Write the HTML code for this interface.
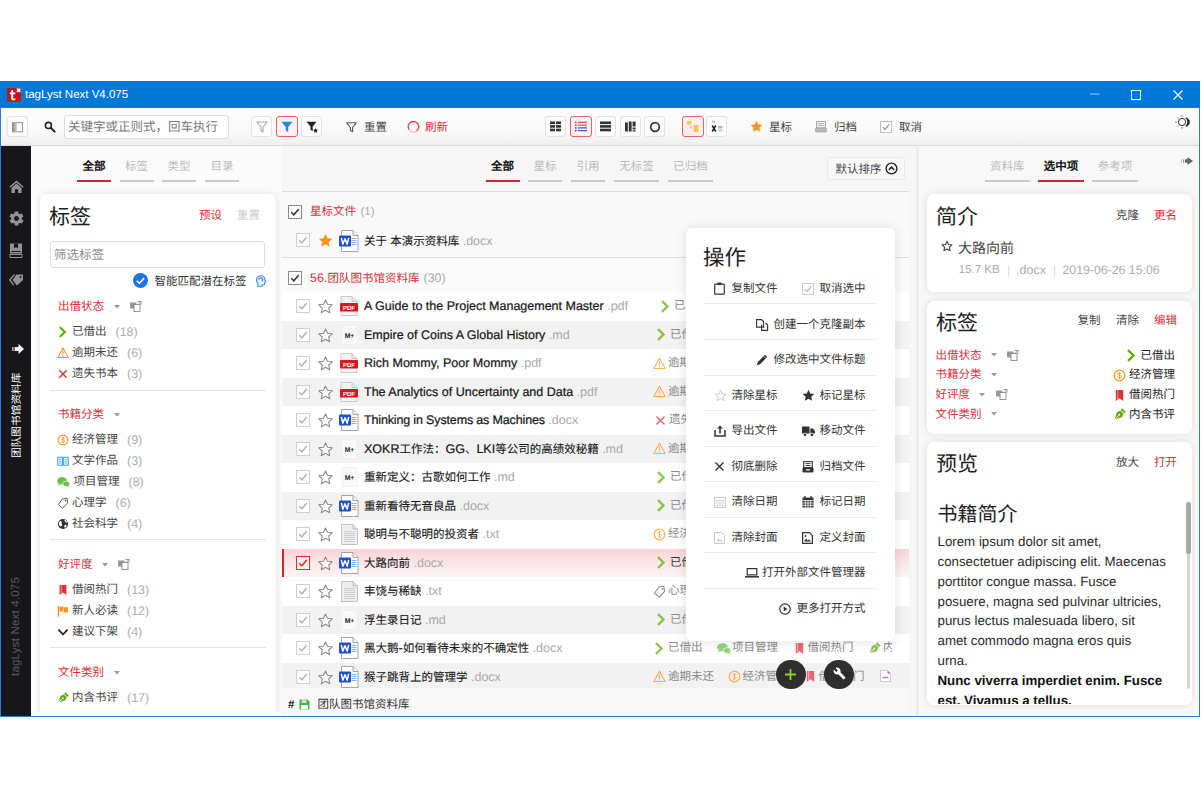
<!DOCTYPE html>
<html lang="zh-CN">
<head>
<meta charset="utf-8">
<title>tagLyst Next V4.075</title>
<style>
*{box-sizing:border-box;margin:0;padding:0}
html,body{width:1202px;height:794px;overflow:hidden;background:#fff}
body{position:relative;font-family:"Liberation Sans",sans-serif;font-size:12px;color:#333;text-rendering:geometricPrecision}
.a{position:absolute;white-space:nowrap}
.t{position:absolute;white-space:nowrap;overflow:visible;height:17px;line-height:17px;font-size:11.5px}
svg{position:absolute;overflow:visible}
.red{color:#d6303a}
.g9{color:#999}
.ga{color:#aaa}
/* window */
#win{left:0;top:81px;width:1200px;height:636px;background:#f6f6f6;border:1px solid #2f7bd6;border-top:0;overflow:hidden}
#title{left:0;top:81px;width:1200px;height:27px;background:#0078d7}
#tool{left:1px;top:108px;width:1198px;height:38px;background:linear-gradient(#fdfdfd 0,#f8f8f8 70%,#eeeeee 100%);border-bottom:1px solid #dcdcdc}
#side{left:1px;top:146px;width:30px;height:570px;background:#17161b}
#lp{left:31px;top:146px;width:251px;height:570px;background:#fbfbfb}
#mp{left:282px;top:146px;width:627px;height:570px;background:#f6f6f6}
#split{left:909px;top:146px;width:11px;height:570px;background:#f6f6f6;border-right:4.5px solid #ececec}
#rp{left:919px;top:146px;width:280px;height:570px;background:#f8f8f8}
.card{position:absolute;background:#fff;border-radius:7px;box-shadow:0 0 7px 1px rgba(0,0,0,.085)}
.tb{position:absolute;top:116px;width:21px;height:21px;border:1px solid #e3e3e3;border-radius:3px;background:#fcfcfc}
.tb.on{border-color:#e4646b;background:#fdf3f3}
.tab{position:absolute;top:159px;height:16px;line-height:16px;font-size:11.5px;color:#bbb;text-align:center;white-space:nowrap;overflow:hidden}
.tab.on{color:#111;font-weight:bold}
.ul{position:absolute;top:180px;height:2px;background:#c9c9c9}
.ul.on{background:#d6222c}
.h{position:absolute;white-space:nowrap;overflow:hidden;font-size:21px;height:28px;line-height:28px;color:#1d1d1d}
.hr{position:absolute;height:1px;background:#e6e6e6}
.fn{-webkit-text-stroke:.1px #161616;position:absolute;left:364px;height:18px;line-height:18px;font-size:11.5px;color:#161616;white-space:nowrap;overflow:hidden;width:285px}
.fn .l{font-size:12.5px;-webkit-text-stroke:.22px #161616}
.fn .ext{font-size:12.5px;color:#a8a8a8;-webkit-text-stroke:0}
i{display:inline-block;width:1em;text-align:center;font-style:normal}
</style>
</head>
<body>
<div class="a" id="win"></div>
<div class="a" id="title"></div>
<div class="a" id="tool"></div>
<div class="a" id="side"></div>
<div class="a" id="lp"></div>
<div class="a" id="mp"></div>
<div class="a" id="split"></div>
<div class="a" id="rp"></div>

<!-- TITLEBAR -->
<svg style="left:7px;top:88px" width="14" height="14" viewBox="0 0 14 14"><rect width="14" height="14" rx="1" fill="#c3161c"/><path d="M9.2 0.6h4.2v4.2l-1.5-1.4-1.2 1.2-1.3-1.3 1.2-1.2z" fill="#fff"/><path d="M4.2 2.2h2v2.3h2.1v1.7H6.2v3.2c0 .9.4 1.2 1 1.2.4 0 .8-.1 1.1-.3v1.6c-.5.3-1.1.4-1.8.4-1.500 0-2.300-.8-2.300-2.600V6.2H2.900V4.500h1.300z" fill="#fff"/></svg>
<div class="t" style="left:25px;top:87px;color:#fff;font-size:11.500px;width:110px" id="ttl">tagLyst Next V4.075</div>
<svg style="left:1090px;top:93px" width="10" height="2"><rect width="9.500" height="1" y="0.500" fill="#9cc8ee"/></svg>
<svg style="left:1131px;top:90px" width="10" height="10"><rect x="0.500" y="0.500" width="9" height="9" fill="none" stroke="#fff" stroke-width="1"/></svg>
<svg style="left:1173px;top:90px" width="10" height="10"><path d="M0.500 0.500l9 9M9.500 0.500l-9 9" stroke="#fff" stroke-width="1.100" fill="none"/></svg>
<!-- TOOLBAR -->
<div class="tb" style="left:7px;width:21px"></div>
<svg style="left:12px;top:121.500px" width="11" height="10.500" viewBox="0 0 12 11"><defs><linearGradient id="gsb" x1="0" x2="1"><stop offset="0" stop-color="#8a8a8a"/><stop offset="1" stop-color="#d8d8d8"/></linearGradient></defs><rect x="0.500" y="0.500" width="11" height="10" fill="#fff" stroke="#8a8a8a"/><rect x="1" y="1" width="4.500" height="9" fill="url(#gsb)"/></svg>
<svg style="left:44px;top:121px" width="12" height="12" viewBox="0 0 13 13"><circle cx="4.800" cy="4.800" r="3.300" fill="none" stroke="#222" stroke-width="1.700"/><path d="M7.300 7.300l4.200 4.200" stroke="#222" stroke-width="2.200" stroke-linecap="round"/></svg>
<div class="a" style="left:64px;top:115px;width:165px;height:24px;border:1px solid #dedede;border-radius:3px;background:#fff"></div>
<div class="t" style="left:68px;top:118px;width:158px;height:18px;line-height:18px;font-size:12.500px;color:#777"><i>关</i><i>键</i><i>字</i><i>或</i><i>正</i><i>则</i><i>式</i><i>，</i><i>回</i><i>车</i><i>执</i><i>行</i></div>
<div class="tb" style="left:251px"></div>
<svg style="left:256px;top:121px" width="12" height="12" viewBox="0 0 12 12"><path d="M1 1h10L7 6v5L5 9.500V6z" fill="none" stroke="#aaa" stroke-width="1.100" stroke-linejoin="round"/></svg>
<div class="tb on" style="left:276px;width:22px"></div>
<svg style="left:281px;top:121px" width="12" height="12" viewBox="0 0 12 12"><path d="M0.500 0.800h11L7.200 6v5.200L4.800 9.600V6z" fill="#1e88e5"/></svg>
<div class="tb" style="left:301px"></div>
<svg style="left:306px;top:121px" width="12" height="12" viewBox="0 0 12 12"><path d="M0.500 0.800h10L6.700 5.500v4.700L4.500 8.800V5.500z" fill="#222"/><path d="M9.500 7l.8 1.600 1.700.2-1.200 1.200.3 1.700-1.600-.8-1.500.8.300-1.700-1.300-1.200 1.800-.2z" fill="#222"/></svg>
<svg style="left:346px;top:122px" width="11" height="11" viewBox="0 0 11 11"><path d="M0.800 0.800h9.400L6.600 5.500v4.300L4.400 8.600V5.500z" fill="none" stroke="#555" stroke-width="1.100" stroke-linejoin="round"/></svg>
<div class="t" style="left:364px;top:120px;width:26px;color:#444"><i>重</i><i>置</i></div>
<svg style="left:407px;top:120px" width="13" height="13" viewBox="0 0 13 13"><path d="M2.100 9.800A5.300 5.300 0 1 1 9.400 11.200" fill="none" stroke="#e0444c" stroke-width="1.300"/><path d="M2.100 9.800A5.300 5.300 0 0 0 9.400 11.200" fill="none" stroke="#f3b9bc" stroke-width="1.300"/></svg>
<div class="t red" style="left:425px;top:120px;width:26px"><i>刷</i><i>新</i></div>

<div class="tb" style="left:545px"></div>
<svg style="left:550px;top:121px" width="11" height="11" viewBox="0 0 11 11"><g fill="#333"><rect x="0" y="0.500" width="5" height="2.600"/><rect x="6" y="0.500" width="5" height="2.600"/><rect x="0" y="4.100" width="5" height="2.600"/><rect x="6" y="4.100" width="5" height="2.600"/><rect x="0" y="7.700" width="5" height="2.600"/><rect x="6" y="7.700" width="5" height="2.600"/></g></svg>
<div class="tb on" style="left:570px;width:22px"></div>
<svg style="left:575px;top:121px" width="12" height="11" viewBox="0 0 12 11"><g fill="#e0444c"><rect x="0" y="0.500" width="1.600" height="1.600"/><rect x="3" y="0.700" width="9" height="1.200"/><rect x="0" y="3.300" width="1.600" height="1.600"/><rect x="3" y="3.500" width="9" height="1.200"/></g><g fill="#3f51b5"><rect x="0" y="6.100" width="1.600" height="1.600"/><rect x="3" y="6.300" width="9" height="1.200"/><rect x="0" y="8.900" width="1.600" height="1.600"/><rect x="3" y="9.100" width="9" height="1.200"/></g></svg>
<div class="tb" style="left:595px"></div>
<svg style="left:600px;top:121px" width="11" height="11" viewBox="0 0 11 11"><g fill="#333"><rect x="0" y="0.500" width="11" height="2.600"/><rect x="0" y="4.100" width="11" height="2.600"/><rect x="0" y="7.700" width="11" height="2.600"/></g></svg>
<div class="tb" style="left:620px"></div>
<svg style="left:625px;top:121px" width="11" height="11" viewBox="0 0 11 11"><g fill="#333"><rect x="0" y="1.500" width="2.800" height="9"/><rect x="3.800" y="0.500" width="2.800" height="10"/><rect x="7.600" y="0.500" width="3" height="5"/><rect x="7.600" y="6.500" width="3" height="2"/><rect x="7.600" y="9.300" width="3" height="1.200"/></g></svg>
<div class="tb" style="left:644px"></div>
<svg style="left:649px;top:121px" width="12" height="12" viewBox="0 0 12 12"><circle cx="6" cy="6" r="4.300" fill="none" stroke="#333" stroke-width="1.700"/></svg>
<div class="tb on" style="left:682px;width:22px;background:#fdeeee"></div>
<svg style="left:686px;top:120px" width="14" height="13" viewBox="0 0 14 13"><path d="M1 1h4.500v3.500H1z" fill="#f3c948"/><path d="M7.500 5h5v3l-1 .8 1 .7v2.500h-5z" fill="#f3c948"/><circle cx="5" cy="7.500" r="1" fill="#bbb"/><path d="M5 5.500v4" stroke="#ccc" stroke-width=".6"/></svg>
<div class="tb" style="left:706px"></div>
<svg style="left:710px;top:120px" width="14" height="13" viewBox="0 0 14 13"><rect x="2" y="0.500" width="3" height="2.500" fill="#ccc"/><path d="M2.200 5.500l3.600 6M5.800 5.500l-3.600 6" stroke="#222" stroke-width="1.500"/><rect x="8" y="6" width="4.500" height="2.500" fill="#bbb"/><rect x="8" y="9.300" width="4.500" height="2.200" fill="#ccc"/></svg>
<svg style="left:750px;top:120px" width="13" height="13" viewBox="0 0 24 24"><path d="M12 1.500l3.200 7 7.600.800-5.700 5.100 1.600 7.500L12 18.100l-6.700 3.800 1.600-7.500L1.200 9.300l7.600-.8z" fill="#f7941d"/></svg>
<div class="t" style="left:769px;top:120px;width:26px;color:#444"><i>星</i><i>标</i></div>
<svg style="left:815px;top:121px" width="12" height="12" viewBox="0 0 12 12"><rect x="1.500" y="0.500" width="9" height="6.500" fill="#eee" stroke="#999" stroke-width=".8"/><path d="M3 2.500h6M3 4.500h6" stroke="#aaa" stroke-width=".8"/><rect x="0.500" y="7" width="11" height="4" rx=".8" fill="#bbb" stroke="#999" stroke-width=".6"/></svg>
<div class="t" style="left:834px;top:120px;width:26px;color:#444"><i>归</i><i>档</i></div>
<svg style="left:880px;top:121px" width="12" height="12" viewBox="0 0 12 12"><rect x="0.500" y="0.500" width="11" height="11" fill="#fff" stroke="#bbb"/><path d="M2.800 6.200l2.200 2.300 4.200-5" fill="none" stroke="#999" stroke-width="1.200"/></svg>
<div class="t" style="left:899px;top:120px;width:26px;color:#444"><i>取</i><i>消</i></div>
<svg style="left:1175px;top:115px" width="15" height="14" viewBox="0 0 15 14"><path d="M8 2.800a4.300 4.300 0 0 1 0 8.600a6 6 0 0 0 0-8.600z" fill="#222" transform="translate(2.500 0)"/><circle cx="7" cy="7" r="3.600" fill="#fff" stroke="#333" stroke-width="1"/><g stroke="#555" stroke-width=".9"><path d="M7 0.300v1.600M7 12.100v1.600M0.300 7h1.600M2.300 2.300l1.100 1.100M2.300 11.700l1.100-1.100M11.700 2.300l-1.100 1.100M11.700 11.700l-1.100-1.100"/></g></svg>
<svg width="0" height="0" style="left:-10px;top:-10px"><defs>
<g id="icp"><rect x="0" y="1.500" width="6.500" height="6" fill="#999"/><rect x="4" y="3.500" width="6" height="7" fill="#fff" stroke="#888" stroke-width=".9"/><path d="M7.500 0.500h3.500v3M11 0.500L8.500 3" fill="none" stroke="#888" stroke-width=".9"/></g>
<g id="i-gt"><path d="M3 1.200l5.500 5.300-5.500 5.300" fill="none" stroke="#60ad00" stroke-width="2.300"/></g>
<g id="i-warn"><path d="M6.500 1.200l5.700 10.300H0.800z" fill="none" stroke="#f7941d" stroke-width="1.100" stroke-linejoin="round"/><path d="M6.500 4.500v3.800M6.500 9.300v1.200" stroke="#f7941d" stroke-width="1.200"/></g>
<g id="i-x"><path d="M2.500 2.500l8 8M10.500 2.500l-8 8" stroke="#e0303a" stroke-width="1.600"/></g>
<g id="i-dollar"><circle cx="6.500" cy="6.500" r="5.300" fill="none" stroke="#f7941d" stroke-width="1.200"/><path d="M8.200 4.700c-.4-.6-1-.8-1.700-.8-.9 0-1.600.4-1.600 1.200 0 1.700 3.400.8 3.400 2.600 0 .8-.8 1.300-1.800 1.300-.8 0-1.500-.3-1.900-.9M6.500 3v7" fill="none" stroke="#f7941d" stroke-width=".9"/></g>
<g id="i-book"><path d="M0.800 2.500h5v8.500h-5zM7.200 2.500h5v8.500h-5z" fill="none" stroke="#3f9be8" stroke-width="1.100"/><path d="M2 4.800h2.600M2 6.800h2.600M2 8.800h2.600M8.400 4.800H11M8.400 6.800H11M8.400 8.800H11" stroke="#3f9be8" stroke-width=".9"/></g>
<g id="i-chat"><ellipse cx="5.500" cy="5.200" rx="5.300" ry="4" fill="#6cc04a"/><path d="M2 7.500L1.200 10.500l3.300-2z" fill="#6cc04a"/><ellipse cx="10" cy="8.500" rx="3.800" ry="2.900" fill="#6cc04a" stroke="#fff" stroke-width=".7"/><path d="M12 10.500l1.400 2-2.900-1z" fill="#6cc04a"/></g>
<g id="i-tag"><path d="M6.500 2h5v5l-6 5L1.200 7.500z" fill="none" stroke="#555" stroke-width="1" stroke-linejoin="round" transform="rotate(-8 6.500 6.500)"/><circle cx="9.300" cy="4" r=".9" fill="#555"/></g>
<g id="i-globe"><circle cx="6.500" cy="6.500" r="5.500" fill="#333"/><path d="M3 3.500c1.500-.5 2.500.5 2 1.800-.4 1 .8 1.400.6 2.600-.2 1-1.300 1.600-2.400.900C2 8 1.500 5 3 3.500zM8 2c1.500.2 2.800 1.500 3 3-.8.300-1.500-.2-2-1-.5-.7-1.300-1-1-2zM8.500 7.500c1-.3 2 .3 1.800 1.300-.2.900-1 1.800-2 1.800-.5-.9-.5-2.500.2-3.100z" fill="#fff"/></g>
<g id="i-bm"><path d="M2.800 1h7.400v11L6.500 9.300 2.800 12z" fill="#e0303a"/><path d="M4.200 1h1v9l-1 .8z" fill="#f19aa0"/></g>
<g id="i-flag"><path d="M1.500 1v11.500" stroke="#f7941d" stroke-width="1.400"/><path d="M2.800 1.500h4v1h5v5.500h-4.500v-1H2.800z" fill="#f7941d"/><path d="M6.800 2.500v4.500" stroke="#fff" stroke-width=".6"/></g>
<g id="i-down"><path d="M1.500 4l5 5 5-5" fill="none" stroke="#222" stroke-width="2"/></g>
<g id="i-pen"><g transform="rotate(45 6.500 6.500)"><path d="M6.500 13.200L3 6.800l1.200-3.800h4.600L10 6.800z" fill="#62ad12"/><rect x="4" y="0.200" width="5" height="2.100" fill="#62ad12"/><path d="M6.500 12.500V7.500" stroke="#fff" stroke-width=".8"/><circle cx="6.500" cy="6.800" r=".9" fill="#fff"/></g></g>
</defs></svg>
<!-- SIDEBAR -->
<svg style="left:8.500px;top:179.500px" width="15" height="13" viewBox="0 0 14 12"><path d="M7 0.300L0.300 6.200l.9 1L7 2.200l5.800 5 .9-1z" fill="#939393"/><path d="M2.300 7.300L7 3.300l4.700 4V12H8.500V8.500h-3V12H2.300z" fill="#939393"/></svg>
<svg style="left:7.500px;top:209.500px" width="17" height="17" viewBox="0 0 24 24"><path fill="#939393" d="M19.400 13c0-.3.100-.6.100-1s0-.7-.1-1l2.100-1.600c.2-.1.200-.4.100-.6l-2-3.500c-.1-.2-.4-.3-.6-.2l-2.500 1c-.5-.4-1.100-.7-1.700-1l-.4-2.600c0-.2-.2-.4-.5-.4h-4c-.2 0-.5.200-.5.400l-.4 2.600c-.6.200-1.100.6-1.700 1l-2.500-1c-.2-.1-.5 0-.6.200l-2 3.500c-.1.200-.1.500.100.600L4.600 11c0 .3-.1.600-.1 1s0 .7.100 1l-2.100 1.600c-.2.100-.2.400-.1.600l2 3.500c.1.200.4.300.6.200l2.500-1c.5.400 1.100.7 1.700 1l.4 2.600c0 .2.200.4.500.4h4c.2 0 .5-.2.500-.4l.4-2.600c.6-.2 1.100-.6 1.700-1l2.500 1c.2.100.5 0 .6-.2l2-3.500c.1-.2.100-.5-.1-.6zM12 15.500c-1.900 0-3.500-1.600-3.500-3.500s1.600-3.500 3.500-3.500 3.500 1.600 3.500 3.500-1.600 3.500-3.500 3.500z"/></svg>
<svg style="left:9px;top:243px" width="14" height="15" viewBox="0 0 14 15"><path d="M1 0.500h12v10H1z" fill="#939393"/><path d="M5 0.500h4v5l-2-1.400-2 1.400z" fill="#17161b"/><path d="M1 11.500h12v3H1z" fill="none" stroke="#939393" stroke-width="1"/><path d="M2.500 8.500h9" stroke="#17161b" stroke-width="1"/></svg>
<svg style="left:9px;top:274px" width="15" height="12" viewBox="0 0 15 12"><path d="M7.500 0.500h6.500v5.500L8 11.500 3.500 6z" fill="#939393"/><circle cx="11.500" cy="3" r="1" fill="#17161b"/><path d="M5.500 0.500L0.700 6l4 5" fill="none" stroke="#939393" stroke-width="1.300"/></svg>
<svg style="left:12px;top:344px" width="12" height="10" viewBox="0 0 12 10"><path d="M6.500 0l5.500 5-5.500 5V7H3V3h3.500z" fill="#fff"/><rect x="0" y="3" width="1" height="4" fill="#e88"/><rect x="1.500" y="3" width="1" height="4" fill="#ccd"/></svg>
<div class="a" style="left:11px;top:458px;width:88px;height:13px;line-height:13px;font-size:10.700px;color:#fff;transform-origin:0 0;transform:rotate(-90deg);overflow:hidden"><i>团</i><i>队</i><i>图</i><i>书</i><i>馆</i><i>资</i><i>料</i><i>库</i></div>
<div class="a" style="left:9px;top:676px;width:104px;height:14px;line-height:14px;font-size:11.500px;color:#5a5a5e;transform-origin:0 0;transform:rotate(-90deg);overflow:hidden;letter-spacing:.2px">tagLyst Next 4.075</div>
<!-- LEFTPANEL -->
<div class="tab on" style="left:77px;width:34px"><i>全</i><i>部</i></div><div class="ul on" style="left:77px;width:34px"></div>
<div class="tab" style="left:119.5px;width:34px"><i>标</i><i>签</i></div><div class="ul" style="left:119.5px;width:34px"></div>
<div class="tab" style="left:162px;width:34px"><i>类</i><i>型</i></div><div class="ul" style="left:162px;width:34px"></div>
<div class="tab" style="left:205px;width:34px"><i>目</i><i>录</i></div><div class="ul" style="left:205px;width:34px"></div>
<div class="card" style="left:40px;top:194px;width:235.500px;height:524px"></div>
<div class="h" style="left:49px;top:203.500px;width:60px"><i>标</i><i>签</i></div>
<div class="t red" style="left:199px;top:208px;width:26px"><i>预</i><i>设</i></div>
<div class="t" style="left:237px;top:208px;width:26px;color:#ccc"><i>重</i><i>置</i></div>
<div class="a" style="left:49.500px;top:241px;width:215.500px;height:26.500px;border:1px solid #dedede;border-radius:3px;background:#fff"></div>
<div class="t" style="left:54px;top:246px;width:80px;height:18px;line-height:18px;font-size:12.500px;color:#8a8a8a"><i>筛</i><i>选</i><i>标</i><i>签</i></div>
<svg style="left:133px;top:273px" width="15" height="15" viewBox="0 0 15 15"><circle cx="7.500" cy="7.500" r="7.500" fill="#1a73e8"/><path d="M3.800 7.700l2.600 2.600 4.800-5.200" fill="none" stroke="#fff" stroke-width="1.600"/></svg>
<div class="t" style="left:154.500px;top:273.500px;width:96px;color:#333"><i>智</i><i>能</i><i>匹</i><i>配</i><i>潜</i><i>在</i><i>标</i><i>签</i></div>
<svg style="left:255px;top:274.500px" width="12" height="12" viewBox="0 0 12 12"><path d="M6.200 0.700C3.400 0.700 1.500 2.600 1.500 5c0 1.300.5 2.300 1.300 3.100V11.300h4.400V9.700h1.500c.6 0 1-.4 1-1V7.300l1.100-.5L9.900 4.800C9.700 2.400 8.200 0.700 6.200 0.700z" fill="#eaf3fd" stroke="#3b8de8" stroke-width="1.100" stroke-linejoin="round"/><path d="M3.600 4.600c.2-1.600 2.500-2.100 3.600-1.100.9.800.7 2.100-.3 2.600" fill="none" stroke="#3b8de8" stroke-width="1.300"/></svg>
<div class="t red" style="left:58px;top:299px;width:48px"><i>出</i><i>借</i><i>状</i><i>态</i></div><svg style="left:113.5px;top:304.5px" width="6" height="4"><path d="M0 0h6L3 3.500z" fill="#999"/></svg><svg style="left:129.5px;top:301px" width="12" height="11" viewBox="0 0 12 11"><use href="#icp"/></svg>
<svg style="left:56.500px;top:325.50px" width="12" height="12" viewBox="0 0 13 13"><use href="#i-gt"/></svg><div class="t" style="left:72px;top:323.5px;width:35.5px;color:#444"><i>已</i><i>借</i><i>出</i></div><div class="t g9" style="left:115.5px;top:323.5px;width:30px;color:#adadad;font-size:12.500px">(18)</div>
<svg style="left:56.500px;top:346.50px" width="12" height="12" viewBox="0 0 13 13"><use href="#i-warn"/></svg><div class="t" style="left:72px;top:344.5px;width:47.0px;color:#444"><i>逾</i><i>期</i><i>未</i><i>还</i></div><div class="t g9" style="left:127.0px;top:344.5px;width:30px;color:#adadad;font-size:12.500px">(6)</div>
<svg style="left:56.500px;top:367.50px" width="12" height="12" viewBox="0 0 13 13"><use href="#i-x"/></svg><div class="t" style="left:72px;top:365.5px;width:47.0px;color:#444"><i>遗</i><i>失</i><i>书</i><i>本</i></div><div class="t g9" style="left:127.0px;top:365.5px;width:30px;color:#adadad;font-size:12.500px">(3)</div>
<div class="hr" style="left:49.500px;top:390px;width:216.500px"></div>
<div class="t red" style="left:58px;top:407px;width:48px"><i>书</i><i>籍</i><i>分</i><i>类</i></div><svg style="left:113.5px;top:412.5px" width="6" height="4"><path d="M0 0h6L3 3.500z" fill="#999"/></svg>
<svg style="left:56.500px;top:433.50px" width="12" height="12" viewBox="0 0 13 13"><use href="#i-dollar"/></svg><div class="t" style="left:72px;top:431.5px;width:47.0px;color:#444"><i>经</i><i>济</i><i>管</i><i>理</i></div><div class="t g9" style="left:127.0px;top:431.5px;width:30px;color:#adadad;font-size:12.500px">(9)</div>
<svg style="left:56.500px;top:454.50px" width="12" height="12" viewBox="0 0 13 13"><use href="#i-book"/></svg><div class="t" style="left:72px;top:452.5px;width:47.0px;color:#444"><i>文</i><i>学</i><i>作</i><i>品</i></div><div class="t g9" style="left:127.0px;top:452.5px;width:30px;color:#adadad;font-size:12.500px">(3)</div>
<svg style="left:56.500px;top:475.50px" width="12" height="12" viewBox="0 0 13 13"><use href="#i-chat"/></svg><div class="t" style="left:73.5px;top:473.5px;width:47.0px;color:#444"><i>项</i><i>目</i><i>管</i><i>理</i></div><div class="t g9" style="left:128.5px;top:473.5px;width:30px;color:#adadad;font-size:12.500px">(8)</div>
<svg style="left:56.500px;top:496.50px" width="12" height="12" viewBox="0 0 13 13"><use href="#i-tag"/></svg><div class="t" style="left:72px;top:494.5px;width:35.5px;color:#444"><i>心</i><i>理</i><i>学</i></div><div class="t g9" style="left:115.5px;top:494.5px;width:30px;color:#adadad;font-size:12.500px">(6)</div>
<svg style="left:56.500px;top:517.50px" width="12" height="12" viewBox="0 0 13 13"><use href="#i-globe"/></svg><div class="t" style="left:72px;top:515.5px;width:47.0px;color:#444"><i>社</i><i>会</i><i>科</i><i>学</i></div><div class="t g9" style="left:127.0px;top:515.5px;width:30px;color:#adadad;font-size:12.500px">(4)</div>
<div class="hr" style="left:49.500px;top:539px;width:216.500px"></div>
<div class="t red" style="left:58px;top:557px;width:48px"><i>好</i><i>评</i><i>度</i></div><svg style="left:102.0px;top:562.5px" width="6" height="4"><path d="M0 0h6L3 3.500z" fill="#999"/></svg><svg style="left:118.0px;top:559px" width="12" height="11" viewBox="0 0 12 11"><use href="#icp"/></svg>
<svg style="left:56.500px;top:583.50px" width="12" height="12" viewBox="0 0 13 13"><use href="#i-bm"/></svg><div class="t" style="left:72px;top:581.5px;width:47.0px;color:#444"><i>借</i><i>阅</i><i>热</i><i>门</i></div><div class="t g9" style="left:127.0px;top:581.5px;width:30px;color:#adadad;font-size:12.500px">(13)</div>
<svg style="left:56.500px;top:604.50px" width="12" height="12" viewBox="0 0 13 13"><use href="#i-flag"/></svg><div class="t" style="left:72px;top:602.5px;width:47.0px;color:#444"><i>新</i><i>人</i><i>必</i><i>读</i></div><div class="t g9" style="left:127.0px;top:602.5px;width:30px;color:#adadad;font-size:12.500px">(12)</div>
<svg style="left:56.500px;top:625.50px" width="12" height="12" viewBox="0 0 13 13"><use href="#i-down"/></svg><div class="t" style="left:72px;top:623.5px;width:47.0px;color:#444"><i>建</i><i>议</i><i>下</i><i>架</i></div><div class="t g9" style="left:127.0px;top:623.5px;width:30px;color:#adadad;font-size:12.500px">(4)</div>
<div class="hr" style="left:49.500px;top:647px;width:216.500px"></div>
<div class="t red" style="left:58px;top:665px;width:48px"><i>文</i><i>件</i><i>类</i><i>别</i></div><svg style="left:113.5px;top:670.5px" width="6" height="4"><path d="M0 0h6L3 3.500z" fill="#999"/></svg>
<svg style="left:56.500px;top:691.50px" width="12" height="12" viewBox="0 0 13 13"><use href="#i-pen"/></svg><div class="t" style="left:72px;top:689.5px;width:47.0px;color:#444"><i>内</i><i>含</i><i>书</i><i>评</i></div><div class="t g9" style="left:127.0px;top:689.5px;width:30px;color:#adadad;font-size:12.500px">(17)</div>
<!-- MIDDLE -->
<div class="a" style="left:31px;top:712px;width:251px;height:4px;background:#fdfdfd"></div>
<div class="tab on" style="left:485.5px;width:34px"><i>全</i><i>部</i></div><div class="ul on" style="left:485.5px;width:34px"></div>
<div class="tab" style="left:528px;width:34px"><i>星</i><i>标</i></div><div class="ul" style="left:528px;width:34px"></div>
<div class="tab" style="left:571px;width:34px"><i>引</i><i>用</i></div><div class="ul" style="left:571px;width:34px"></div>
<div class="tab" style="left:614px;width:45px"><i>无</i><i>标</i><i>签</i></div><div class="ul" style="left:614px;width:45px"></div>
<div class="tab" style="left:668px;width:45px"><i>已</i><i>归</i><i>档</i></div><div class="ul" style="left:668px;width:45px"></div>
<div class="a" style="left:827px;top:157px;width:78px;height:23px;border:1px solid #e9e9e9;border-radius:3px;background:#f8f8f8"></div>
<div class="t" style="left:835.500px;top:161.500px;width:48px;color:#444"><i>默</i><i>认</i><i>排</i><i>序</i></div>
<svg style="left:884.500px;top:162px" width="13" height="13" viewBox="0 0 13 13"><circle cx="6.500" cy="6.500" r="5.400" fill="none" stroke="#222" stroke-width="1.400"/><path d="M3.800 7.800l2.700-2.700 2.700 2.700" fill="none" stroke="#222" stroke-width="1.500"/></svg>
<div class="a" style="left:282px;top:190.500px;width:627px;height:1px;background:#dcdcdc"></div>
<div class="a" style="left:282px;top:191.500px;width:627px;height:65.500px;background:#f9f9f9"></div>
<div class="a" style="left:282px;top:257px;width:627px;height:1px;background:#dcdcdc"></div>
<div class="a" style="left:282px;top:258px;width:627px;height:34px;background:#fafafa"></div>

<svg style="left:287.5px;top:204.5px" width="14" height="14" viewBox="0 0 14 14"><rect x="0.500" y="0.500" width="13" height="13" fill="#fff" stroke="#8a8a8a"/><path d="M3.200 7.200l2.600 2.600 5-5.800" fill="none" stroke="#333" stroke-width="1.500"/></svg><div class="t red" style="left:310px;top:204px;width:48px"><i>星</i><i>标</i><i>文</i><i>件</i></div><div class="t" style="left:360.500px;top:204px;width:20px;color:#aaa">(1)</div>
<svg style="left:295.7px;top:233.3px" width="14" height="14" viewBox="0 0 14 14"><rect x="0.500" y="0.500" width="13" height="13" fill="#fff" stroke="#cfcfcf"/><path d="M3.200 7.200l2.600 2.600 5-5.800" fill="none" stroke="#b5b5b5" stroke-width="1.500"/></svg><svg style="left:317.500px;top:233.00px" width="15" height="15" viewBox="0 0 24 24"><path d="M12 1.500l3.200 7 7.600.800-5.700 5.100 1.600 7.500L12 18.100l-6.700 3.800 1.600-7.500L1.200 9.300l7.600-.8z" fill="#f7941d"/></svg><svg style="left:339px;top:229.5px" width="20" height="22" viewBox="0 0 20 22"><path d="M2.500 0.500h11.500l5 5v16h-16.500z" fill="#fff" stroke="#9a9a9a" stroke-width=".9"/><path d="M14 0.500v5h5" fill="#f2f2f2" stroke="#9a9a9a" stroke-width=".9"/><path d="M12.500 8.500h5M12.500 10.500h5M12.500 12.500h5M12.500 14.500h5" stroke="#7aa7e0" stroke-width=".9"/><rect x="0" y="5.500" width="12" height="11" rx="1" fill="#1e50c8"/><path d="M2.300 7.800l1.500 6.400L6 8.800l2.200 5.400 1.500-6.400" fill="none" stroke="#fff" stroke-width="1.500" stroke-linejoin="round"/></svg><div class="fn" style="top:232.3px"><i>关</i><i>于</i> <i>本</i><i>演</i><i>示</i><i>资</i><i>料</i><i>库</i><span class="ext"> .docx</span></div>
<svg style="left:287.5px;top:271px" width="14" height="14" viewBox="0 0 14 14"><rect x="0.500" y="0.500" width="13" height="13" fill="#fff" stroke="#8a8a8a"/><path d="M3.200 7.200l2.600 2.600 5-5.800" fill="none" stroke="#333" stroke-width="1.500"/></svg><div class="t red" style="left:310px;top:270px;width:110px"><span style="font-size:12.500px">56.</span><i>团</i><i>队</i><i>图</i><i>书</i><i>馆</i><i>资</i><i>料</i><i>库</i></div><div class="t" style="left:423.500px;top:270px;width:26px;color:#aaa;font-size:12.500px">(30)</div>
<div class="a" style="left:282px;top:292.20px;width:627px;height:28.500px;background:#fff"></div><svg style="left:295.7px;top:299.45px" width="14" height="14" viewBox="0 0 14 14"><rect x="0.500" y="0.500" width="13" height="13" fill="#fff" stroke="#cfcfcf"/><path d="M3.200 7.200l2.600 2.600 5-5.800" fill="none" stroke="#b5b5b5" stroke-width="1.500"/></svg><svg style="left:317.500px;top:299.15px" width="15" height="15" viewBox="0 0 24 24"><path d="M12 1.500l3.200 7 7.600.800-5.700 5.100 1.600 7.500L12 18.100l-6.700 3.800 1.600-7.500L1.200 9.300l7.600-.8z" fill="#fff" stroke="#8a8a8a" stroke-width="1.700" stroke-linejoin="round"/></svg><svg style="left:340px;top:296.25px" width="18" height="20" viewBox="0 0 18 20"><path d="M1 0.500h11l5 5v14H1z" fill="#f4f4f4" stroke="#c4c4c4" stroke-width=".9"/><path d="M12 0.500v5h5" fill="#e6e6e6" stroke="#c4c4c4" stroke-width=".9"/><rect x="0" y="7" width="18" height="8.500" rx="1" fill="#e0141e"/><text x="9" y="13.700" font-family="Liberation Sans,sans-serif" font-size="6" font-weight="bold" fill="#fff" text-anchor="middle">PDF</text></svg><div class="fn" style="top:297.45px"><span class="l">A Guide to the Project Management Master</span><span class="ext"> .pdf</span></div><svg style="opacity:.72;left:659px;top:299.95px" width="13" height="13" viewBox="0 0 13 13"><use href="#i-gt"/></svg><div class="t" style="left:674px;top:298.45px;width:35.5px;color:#8a8a8a"><i>已</i><i>借</i><i>出</i></div>
<div class="a" style="left:282px;top:320.70px;width:627px;height:28.500px;background:#f2f2f2"></div><svg style="left:295.7px;top:327.95px" width="14" height="14" viewBox="0 0 14 14"><rect x="0.500" y="0.500" width="13" height="13" fill="#fff" stroke="#cfcfcf"/><path d="M3.200 7.200l2.600 2.600 5-5.800" fill="none" stroke="#b5b5b5" stroke-width="1.500"/></svg><svg style="left:317.500px;top:327.65px" width="15" height="15" viewBox="0 0 24 24"><path d="M12 1.500l3.200 7 7.600.800-5.700 5.100 1.600 7.500L12 18.100l-6.700 3.800 1.600-7.500L1.200 9.300l7.600-.8z" fill="#fff" stroke="#8a8a8a" stroke-width="1.700" stroke-linejoin="round"/></svg><svg style="left:340px;top:324.95px" width="19" height="20" viewBox="0 0 19 20"><path d="M2 0.500h15v19H2z" fill="#f9f9f9" stroke="#eee" stroke-width=".8"/><text x="9.500" y="13" font-family="Liberation Sans,sans-serif" font-size="6.800" font-weight="bold" fill="#1c1c1c" text-anchor="middle">M+</text></svg><div class="fn" style="top:325.95px"><span class="l">Empire of Coins A Global History</span><span class="ext"> .md</span></div><svg style="opacity:.72;left:655px;top:328.45px" width="13" height="13" viewBox="0 0 13 13"><use href="#i-gt"/></svg><div class="t" style="left:670px;top:326.95px;width:35.5px;color:#8a8a8a"><i>已</i><i>借</i><i>出</i></div>
<div class="a" style="left:282px;top:349.20px;width:627px;height:28.500px;background:#fff"></div><svg style="left:295.7px;top:356.45px" width="14" height="14" viewBox="0 0 14 14"><rect x="0.500" y="0.500" width="13" height="13" fill="#fff" stroke="#cfcfcf"/><path d="M3.200 7.200l2.600 2.600 5-5.800" fill="none" stroke="#b5b5b5" stroke-width="1.500"/></svg><svg style="left:317.500px;top:356.15px" width="15" height="15" viewBox="0 0 24 24"><path d="M12 1.500l3.200 7 7.600.800-5.700 5.100 1.600 7.500L12 18.100l-6.700 3.800 1.600-7.500L1.200 9.300l7.600-.8z" fill="#fff" stroke="#8a8a8a" stroke-width="1.700" stroke-linejoin="round"/></svg><svg style="left:340px;top:353.25px" width="18" height="20" viewBox="0 0 18 20"><path d="M1 0.500h11l5 5v14H1z" fill="#f4f4f4" stroke="#c4c4c4" stroke-width=".9"/><path d="M12 0.500v5h5" fill="#e6e6e6" stroke="#c4c4c4" stroke-width=".9"/><rect x="0" y="7" width="18" height="8.500" rx="1" fill="#e0141e"/><text x="9" y="13.700" font-family="Liberation Sans,sans-serif" font-size="6" font-weight="bold" fill="#fff" text-anchor="middle">PDF</text></svg><div class="fn" style="top:354.45px"><span class="l">Rich Mommy, Poor Mommy</span><span class="ext"> .pdf</span></div><svg style="opacity:.72;left:653px;top:356.95px" width="13" height="13" viewBox="0 0 13 13"><use href="#i-warn"/></svg><div class="t" style="left:668px;top:355.45px;width:47.0px;color:#8a8a8a"><i>逾</i><i>期</i><i>未</i><i>还</i></div>
<div class="a" style="left:282px;top:377.70px;width:627px;height:28.500px;background:#f2f2f2"></div><svg style="left:295.7px;top:384.95px" width="14" height="14" viewBox="0 0 14 14"><rect x="0.500" y="0.500" width="13" height="13" fill="#fff" stroke="#cfcfcf"/><path d="M3.200 7.200l2.600 2.600 5-5.800" fill="none" stroke="#b5b5b5" stroke-width="1.500"/></svg><svg style="left:317.500px;top:384.65px" width="15" height="15" viewBox="0 0 24 24"><path d="M12 1.500l3.200 7 7.600.800-5.700 5.100 1.600 7.500L12 18.100l-6.700 3.800 1.600-7.500L1.200 9.300l7.600-.8z" fill="#fff" stroke="#8a8a8a" stroke-width="1.700" stroke-linejoin="round"/></svg><svg style="left:340px;top:381.75px" width="18" height="20" viewBox="0 0 18 20"><path d="M1 0.500h11l5 5v14H1z" fill="#f4f4f4" stroke="#c4c4c4" stroke-width=".9"/><path d="M12 0.500v5h5" fill="#e6e6e6" stroke="#c4c4c4" stroke-width=".9"/><rect x="0" y="7" width="18" height="8.500" rx="1" fill="#e0141e"/><text x="9" y="13.700" font-family="Liberation Sans,sans-serif" font-size="6" font-weight="bold" fill="#fff" text-anchor="middle">PDF</text></svg><div class="fn" style="top:382.95px"><span class="l">The Analytics of Uncertainty and Data</span><span class="ext"> .pdf</span></div><svg style="opacity:.72;left:653px;top:385.45px" width="13" height="13" viewBox="0 0 13 13"><use href="#i-warn"/></svg><div class="t" style="left:668px;top:383.95px;width:47.0px;color:#8a8a8a"><i>逾</i><i>期</i><i>未</i><i>还</i></div>
<div class="a" style="left:282px;top:406.20px;width:627px;height:28.500px;background:#fff"></div><svg style="left:295.7px;top:413.45px" width="14" height="14" viewBox="0 0 14 14"><rect x="0.500" y="0.500" width="13" height="13" fill="#fff" stroke="#cfcfcf"/><path d="M3.200 7.200l2.600 2.600 5-5.800" fill="none" stroke="#b5b5b5" stroke-width="1.500"/></svg><svg style="left:317.500px;top:413.15px" width="15" height="15" viewBox="0 0 24 24"><path d="M12 1.500l3.200 7 7.600.800-5.700 5.100 1.600 7.500L12 18.100l-6.700 3.800 1.600-7.500L1.200 9.300l7.600-.8z" fill="#fff" stroke="#8a8a8a" stroke-width="1.700" stroke-linejoin="round"/></svg><svg style="left:339px;top:409.45px" width="20" height="22" viewBox="0 0 20 22"><path d="M2.500 0.500h11.500l5 5v16h-16.500z" fill="#fff" stroke="#9a9a9a" stroke-width=".9"/><path d="M14 0.500v5h5" fill="#f2f2f2" stroke="#9a9a9a" stroke-width=".9"/><path d="M12.500 8.500h5M12.500 10.500h5M12.500 12.500h5M12.500 14.500h5" stroke="#7aa7e0" stroke-width=".9"/><rect x="0" y="5.500" width="12" height="11" rx="1" fill="#1e50c8"/><path d="M2.300 7.800l1.500 6.400L6 8.800l2.200 5.400 1.500-6.400" fill="none" stroke="#fff" stroke-width="1.500" stroke-linejoin="round"/></svg><div class="fn" style="top:411.45px"><span class="l" style="letter-spacing:-.15px">Thinking in Systems as Machines</span><span class="ext"> .docx</span></div><svg style="opacity:.72;left:654px;top:413.95px" width="13" height="13" viewBox="0 0 13 13"><use href="#i-x"/></svg><div class="t" style="left:669px;top:412.45px;width:47.0px;color:#8a8a8a"><i>遗</i><i>失</i><i>书</i><i>本</i></div>
<div class="a" style="left:282px;top:434.70px;width:627px;height:28.500px;background:#f2f2f2"></div><svg style="left:295.7px;top:441.95px" width="14" height="14" viewBox="0 0 14 14"><rect x="0.500" y="0.500" width="13" height="13" fill="#fff" stroke="#cfcfcf"/><path d="M3.200 7.200l2.600 2.600 5-5.800" fill="none" stroke="#b5b5b5" stroke-width="1.500"/></svg><svg style="left:317.500px;top:441.65px" width="15" height="15" viewBox="0 0 24 24"><path d="M12 1.500l3.200 7 7.600.800-5.700 5.100 1.600 7.500L12 18.100l-6.700 3.800 1.600-7.500L1.200 9.300l7.600-.8z" fill="#fff" stroke="#8a8a8a" stroke-width="1.700" stroke-linejoin="round"/></svg><svg style="left:340px;top:438.95px" width="19" height="20" viewBox="0 0 19 20"><path d="M2 0.500h15v19H2z" fill="#f9f9f9" stroke="#eee" stroke-width=".8"/><text x="9.500" y="13" font-family="Liberation Sans,sans-serif" font-size="6.800" font-weight="bold" fill="#1c1c1c" text-anchor="middle">M+</text></svg><div class="fn" style="top:439.95px"><span class="l">XOKR</span><i>工</i><i>作</i><i>法</i><i>：</i><span class="l">GG</span><i>、</i><span class="l">LKI</span><i>等</i><i>公</i><i>司</i><i>的</i><i>高</i><i>绩</i><i>效</i><i>秘</i><i>籍</i><span class="ext"> .md</span></div><svg style="opacity:.72;left:653px;top:442.45px" width="13" height="13" viewBox="0 0 13 13"><use href="#i-warn"/></svg><div class="t" style="left:668px;top:440.95px;width:47.0px;color:#8a8a8a"><i>逾</i><i>期</i><i>未</i><i>还</i></div>
<div class="a" style="left:282px;top:463.20px;width:627px;height:28.500px;background:#fff"></div><svg style="left:295.7px;top:470.45px" width="14" height="14" viewBox="0 0 14 14"><rect x="0.500" y="0.500" width="13" height="13" fill="#fff" stroke="#cfcfcf"/><path d="M3.200 7.200l2.600 2.600 5-5.800" fill="none" stroke="#b5b5b5" stroke-width="1.500"/></svg><svg style="left:317.500px;top:470.15px" width="15" height="15" viewBox="0 0 24 24"><path d="M12 1.500l3.200 7 7.600.800-5.700 5.100 1.600 7.500L12 18.100l-6.700 3.800 1.600-7.500L1.200 9.300l7.600-.8z" fill="#fff" stroke="#8a8a8a" stroke-width="1.700" stroke-linejoin="round"/></svg><svg style="left:340px;top:467.45px" width="19" height="20" viewBox="0 0 19 20"><path d="M2 0.500h15v19H2z" fill="#f9f9f9" stroke="#eee" stroke-width=".8"/><text x="9.500" y="13" font-family="Liberation Sans,sans-serif" font-size="6.800" font-weight="bold" fill="#1c1c1c" text-anchor="middle">M+</text></svg><div class="fn" style="top:468.45px"><i>重</i><i>新</i><i>定</i><i>义</i><i>：</i><i>古</i><i>歌</i><i>如</i><i>何</i><i>工</i><i>作</i><span class="ext"> .md</span></div><svg style="opacity:.72;left:655px;top:470.95px" width="13" height="13" viewBox="0 0 13 13"><use href="#i-gt"/></svg><div class="t" style="left:670px;top:469.45px;width:35.5px;color:#8a8a8a"><i>已</i><i>借</i><i>出</i></div>
<div class="a" style="left:282px;top:491.70px;width:627px;height:28.500px;background:#f2f2f2"></div><svg style="left:295.7px;top:498.95px" width="14" height="14" viewBox="0 0 14 14"><rect x="0.500" y="0.500" width="13" height="13" fill="#fff" stroke="#cfcfcf"/><path d="M3.200 7.200l2.600 2.600 5-5.800" fill="none" stroke="#b5b5b5" stroke-width="1.500"/></svg><svg style="left:317.500px;top:498.65px" width="15" height="15" viewBox="0 0 24 24"><path d="M12 1.500l3.200 7 7.600.800-5.700 5.100 1.600 7.500L12 18.100l-6.700 3.800 1.600-7.500L1.200 9.300l7.600-.8z" fill="#fff" stroke="#8a8a8a" stroke-width="1.700" stroke-linejoin="round"/></svg><svg style="left:339px;top:494.95px" width="20" height="22" viewBox="0 0 20 22"><path d="M2.500 0.500h11.500l5 5v16h-16.500z" fill="#fff" stroke="#9a9a9a" stroke-width=".9"/><path d="M14 0.500v5h5" fill="#f2f2f2" stroke="#9a9a9a" stroke-width=".9"/><path d="M12.500 8.500h5M12.500 10.500h5M12.500 12.500h5M12.500 14.500h5" stroke="#7aa7e0" stroke-width=".9"/><rect x="0" y="5.500" width="12" height="11" rx="1" fill="#1e50c8"/><path d="M2.300 7.800l1.500 6.400L6 8.800l2.200 5.400 1.500-6.400" fill="none" stroke="#fff" stroke-width="1.500" stroke-linejoin="round"/></svg><div class="fn" style="top:496.95px"><i>重</i><i>新</i><i>看</i><i>待</i><i>无</i><i>音</i><i>良</i><i>品</i><span class="ext"> .docx</span></div><svg style="opacity:.72;left:655px;top:499.45px" width="13" height="13" viewBox="0 0 13 13"><use href="#i-gt"/></svg><div class="t" style="left:670px;top:497.95px;width:35.5px;color:#8a8a8a"><i>已</i><i>借</i><i>出</i></div>
<div class="a" style="left:282px;top:520.20px;width:627px;height:28.500px;background:#fff"></div><svg style="left:295.7px;top:527.45px" width="14" height="14" viewBox="0 0 14 14"><rect x="0.500" y="0.500" width="13" height="13" fill="#fff" stroke="#cfcfcf"/><path d="M3.200 7.200l2.600 2.600 5-5.800" fill="none" stroke="#b5b5b5" stroke-width="1.500"/></svg><svg style="left:317.500px;top:527.15px" width="15" height="15" viewBox="0 0 24 24"><path d="M12 1.500l3.200 7 7.600.800-5.700 5.100 1.600 7.500L12 18.100l-6.700 3.800 1.600-7.500L1.200 9.300l7.600-.8z" fill="#fff" stroke="#8a8a8a" stroke-width="1.700" stroke-linejoin="round"/></svg><svg style="left:340.5px;top:524.45px" width="17" height="21" viewBox="0 0 17 21"><path d="M0.500 0.500h11.500l4.500 4.500v15.500h-16z" fill="#eee" stroke="#bdbdbd" stroke-width=".9"/><path d="M12 0.500v4.500h4.500" fill="#ddd" stroke="#bdbdbd" stroke-width=".9"/><path d="M3 7.500h11M3 9.500h11M3 11.500h11M3 13.500h11M3 15.500h11M3 17.500h11" stroke="#c9c9c9" stroke-width=".9"/></svg><div class="fn" style="top:525.45px"><i>聪</i><i>明</i><i>与</i><i>不</i><i>聪</i><i>明</i><i>的</i><i>投</i><i>资</i><i>者</i><span class="ext"> .txt</span></div><svg style="opacity:.72;left:653px;top:527.95px" width="13" height="13" viewBox="0 0 13 13"><use href="#i-dollar"/></svg><div class="t" style="left:668px;top:526.45px;width:47.0px;color:#8a8a8a"><i>经</i><i>济</i><i>管</i><i>理</i></div>
<div class="a" style="left:282px;top:548.70px;width:627px;height:28.500px;background:linear-gradient(#f8d3d6 0,#fbe4e6 45%,#fdf4f5 100%);border-left:2px solid #d6222c"></div><svg style="left:295.7px;top:555.95px" width="14" height="14" viewBox="0 0 14 14"><rect x="0.500" y="0.500" width="13" height="13" fill="#fdeeee" stroke="#d6303a"/><path d="M3.200 7.200l2.600 2.600 5-5.800" fill="none" stroke="#d6303a" stroke-width="1.500"/></svg><svg style="left:317.500px;top:555.65px" width="15" height="15" viewBox="0 0 24 24"><path d="M12 1.500l3.200 7 7.600.800-5.700 5.100 1.600 7.500L12 18.100l-6.700 3.800 1.600-7.500L1.200 9.300l7.600-.8z" fill="#fff" stroke="#8a8a8a" stroke-width="1.700" stroke-linejoin="round"/></svg><svg style="left:339px;top:551.95px" width="20" height="22" viewBox="0 0 20 22"><path d="M2.500 0.500h11.500l5 5v16h-16.500z" fill="#fff" stroke="#9a9a9a" stroke-width=".9"/><path d="M14 0.500v5h5" fill="#f2f2f2" stroke="#9a9a9a" stroke-width=".9"/><path d="M12.500 8.500h5M12.500 10.500h5M12.500 12.500h5M12.500 14.500h5" stroke="#7aa7e0" stroke-width=".9"/><rect x="0" y="5.500" width="12" height="11" rx="1" fill="#1e50c8"/><path d="M2.300 7.800l1.500 6.400L6 8.800l2.200 5.400 1.500-6.400" fill="none" stroke="#fff" stroke-width="1.500" stroke-linejoin="round"/></svg><div class="fn" style="top:553.95px"><i>大</i><i>路</i><i>向</i><i>前</i><span class="ext"> .docx</span></div><svg style="opacity:.72;left:655px;top:556.45px" width="13" height="13" viewBox="0 0 13 13"><use href="#i-gt"/></svg><div class="t" style="left:670px;top:554.95px;width:35.5px;color:#333"><i>已</i><i>借</i><i>出</i></div>
<div class="a" style="left:282px;top:577.20px;width:627px;height:28.500px;background:#fff"></div><svg style="left:295.7px;top:584.45px" width="14" height="14" viewBox="0 0 14 14"><rect x="0.500" y="0.500" width="13" height="13" fill="#fff" stroke="#cfcfcf"/><path d="M3.200 7.200l2.600 2.600 5-5.800" fill="none" stroke="#b5b5b5" stroke-width="1.500"/></svg><svg style="left:317.500px;top:584.15px" width="15" height="15" viewBox="0 0 24 24"><path d="M12 1.500l3.200 7 7.600.800-5.700 5.100 1.600 7.500L12 18.100l-6.700 3.800 1.600-7.500L1.200 9.300l7.600-.8z" fill="#fff" stroke="#8a8a8a" stroke-width="1.700" stroke-linejoin="round"/></svg><svg style="left:340.5px;top:581.45px" width="17" height="21" viewBox="0 0 17 21"><path d="M0.500 0.500h11.500l4.500 4.500v15.500h-16z" fill="#eee" stroke="#bdbdbd" stroke-width=".9"/><path d="M12 0.500v4.500h4.500" fill="#ddd" stroke="#bdbdbd" stroke-width=".9"/><path d="M3 7.500h11M3 9.500h11M3 11.500h11M3 13.500h11M3 15.500h11M3 17.500h11" stroke="#c9c9c9" stroke-width=".9"/></svg><div class="fn" style="top:582.45px"><i>丰</i><i>饶</i><i>与</i><i>稀</i><i>缺</i><span class="ext"> .txt</span></div><svg style="opacity:.72;left:653px;top:584.95px" width="13" height="13" viewBox="0 0 13 13"><use href="#i-tag"/></svg><div class="t" style="left:668px;top:583.45px;width:35.5px;color:#8a8a8a"><i>心</i><i>理</i><i>学</i></div>
<div class="a" style="left:282px;top:605.70px;width:627px;height:28.500px;background:#f2f2f2"></div><svg style="left:295.7px;top:612.95px" width="14" height="14" viewBox="0 0 14 14"><rect x="0.500" y="0.500" width="13" height="13" fill="#fff" stroke="#cfcfcf"/><path d="M3.200 7.200l2.600 2.600 5-5.800" fill="none" stroke="#b5b5b5" stroke-width="1.500"/></svg><svg style="left:317.500px;top:612.65px" width="15" height="15" viewBox="0 0 24 24"><path d="M12 1.500l3.200 7 7.600.800-5.700 5.100 1.600 7.500L12 18.100l-6.700 3.800 1.600-7.500L1.200 9.300l7.600-.8z" fill="#fff" stroke="#8a8a8a" stroke-width="1.700" stroke-linejoin="round"/></svg><svg style="left:340px;top:609.95px" width="19" height="20" viewBox="0 0 19 20"><path d="M2 0.500h15v19H2z" fill="#f9f9f9" stroke="#eee" stroke-width=".8"/><text x="9.500" y="13" font-family="Liberation Sans,sans-serif" font-size="6.800" font-weight="bold" fill="#1c1c1c" text-anchor="middle">M+</text></svg><div class="fn" style="top:610.95px"><i>浮</i><i>生</i><i>录</i><i>日</i><i>记</i><span class="ext"> .md</span></div><svg style="opacity:.72;left:655px;top:613.45px" width="13" height="13" viewBox="0 0 13 13"><use href="#i-gt"/></svg><div class="t" style="left:670px;top:611.95px;width:35.5px;color:#8a8a8a"><i>已</i><i>借</i><i>出</i></div>
<div class="a" style="left:282px;top:634.20px;width:627px;height:28.500px;background:#fff"></div><svg style="left:295.7px;top:641.45px" width="14" height="14" viewBox="0 0 14 14"><rect x="0.500" y="0.500" width="13" height="13" fill="#fff" stroke="#cfcfcf"/><path d="M3.200 7.200l2.600 2.600 5-5.800" fill="none" stroke="#b5b5b5" stroke-width="1.500"/></svg><svg style="left:317.500px;top:641.15px" width="15" height="15" viewBox="0 0 24 24"><path d="M12 1.500l3.200 7 7.600.800-5.700 5.100 1.600 7.500L12 18.100l-6.700 3.800 1.600-7.500L1.200 9.300l7.600-.8z" fill="#fff" stroke="#8a8a8a" stroke-width="1.700" stroke-linejoin="round"/></svg><svg style="left:339px;top:637.45px" width="20" height="22" viewBox="0 0 20 22"><path d="M2.500 0.500h11.500l5 5v16h-16.500z" fill="#fff" stroke="#9a9a9a" stroke-width=".9"/><path d="M14 0.500v5h5" fill="#f2f2f2" stroke="#9a9a9a" stroke-width=".9"/><path d="M12.500 8.500h5M12.500 10.500h5M12.500 12.500h5M12.500 14.500h5" stroke="#7aa7e0" stroke-width=".9"/><rect x="0" y="5.500" width="12" height="11" rx="1" fill="#1e50c8"/><path d="M2.300 7.800l1.500 6.400L6 8.800l2.200 5.400 1.500-6.400" fill="none" stroke="#fff" stroke-width="1.500" stroke-linejoin="round"/></svg><div class="fn" style="top:639.45px"><i>黑</i><i>大</i><i>鹅</i><span class="l">-</span><i>如</i><i>何</i><i>看</i><i>待</i><i>未</i><i>来</i><i>的</i><i>不</i><i>确</i><i>定</i><i>性</i><span class="ext"> .docx</span></div><svg style="opacity:.72;left:653px;top:641.95px" width="13" height="13" viewBox="0 0 13 13"><use href="#i-gt"/></svg><div class="t" style="left:668px;top:640.45px;width:35.5px;color:#8a8a8a"><i>已</i><i>借</i><i>出</i></div><svg style="opacity:.72;left:717px;top:641.95px" width="13" height="13" viewBox="0 0 13 13"><use href="#i-chat"/></svg><div class="t" style="left:732px;top:640.45px;width:47.0px;color:#8a8a8a"><i>项</i><i>目</i><i>管</i><i>理</i></div><svg style="opacity:.72;left:792.5px;top:641.95px" width="13" height="13" viewBox="0 0 13 13"><use href="#i-bm"/></svg><div class="t" style="left:807.5px;top:640.45px;width:47.0px;color:#8a8a8a"><i>借</i><i>阅</i><i>热</i><i>门</i></div><svg style="opacity:.72;left:868px;top:641.95px" width="13" height="13" viewBox="0 0 13 13"><use href="#i-pen"/></svg><div class="t" style="left:883px;top:640.45px;width:9px;overflow:hidden;color:#8a8a8a"><i>内</i></div>
<div class="a" style="left:282px;top:662.70px;width:627px;height:28.500px;background:#f2f2f2"></div><svg style="left:295.7px;top:669.95px" width="14" height="14" viewBox="0 0 14 14"><rect x="0.500" y="0.500" width="13" height="13" fill="#fff" stroke="#cfcfcf"/><path d="M3.200 7.200l2.600 2.600 5-5.800" fill="none" stroke="#b5b5b5" stroke-width="1.500"/></svg><svg style="left:317.500px;top:669.65px" width="15" height="15" viewBox="0 0 24 24"><path d="M12 1.500l3.200 7 7.600.800-5.700 5.100 1.600 7.500L12 18.100l-6.700 3.800 1.600-7.500L1.200 9.300l7.600-.8z" fill="#fff" stroke="#8a8a8a" stroke-width="1.700" stroke-linejoin="round"/></svg><svg style="left:339px;top:665.95px" width="20" height="22" viewBox="0 0 20 22"><path d="M2.500 0.500h11.500l5 5v16h-16.500z" fill="#fff" stroke="#9a9a9a" stroke-width=".9"/><path d="M14 0.500v5h5" fill="#f2f2f2" stroke="#9a9a9a" stroke-width=".9"/><path d="M12.500 8.500h5M12.500 10.500h5M12.500 12.500h5M12.500 14.500h5" stroke="#7aa7e0" stroke-width=".9"/><rect x="0" y="5.500" width="12" height="11" rx="1" fill="#1e50c8"/><path d="M2.300 7.800l1.500 6.400L6 8.800l2.200 5.400 1.500-6.400" fill="none" stroke="#fff" stroke-width="1.500" stroke-linejoin="round"/></svg><div class="fn" style="top:667.95px"><i>猴</i><i>子</i><i>跳</i><i>背</i><i>上</i><i>的</i><i>管</i><i>理</i><i>学</i><span class="ext"> .docx</span></div><svg style="opacity:.72;left:653px;top:670.45px" width="13" height="13" viewBox="0 0 13 13"><use href="#i-warn"/></svg><div class="t" style="left:668px;top:668.95px;width:47.0px;color:#8a8a8a"><i>逾</i><i>期</i><i>未</i><i>还</i></div><svg style="opacity:.72;left:727.5px;top:670.45px" width="13" height="13" viewBox="0 0 13 13"><use href="#i-dollar"/></svg><div class="t" style="left:742.5px;top:668.95px;width:47.0px;color:#8a8a8a"><i>经</i><i>济</i><i>管</i><i>理</i></div><svg style="opacity:.72;left:803.5px;top:670.45px" width="13" height="13" viewBox="0 0 13 13"><use href="#i-bm"/></svg><div class="t" style="left:818.5px;top:668.95px;width:47.0px;color:#8a8a8a"><i>借</i><i>阅</i><i>热</i><i>门</i></div><svg style="left:879.500px;top:669.95px" width="11" height="12" viewBox="0 0 11 12"><path d="M0.500 0.500h7l3 3v8h-10z" fill="#fff" stroke="#c9c0cf" stroke-width=".9"/><path d="M7.500 0.500v3h3z" fill="#b05cc4"/><rect x="2.500" y="6.800" width="6" height="1.500" fill="#b57cc6"/></svg>
<div class="a" style="left:282px;top:688px;width:627px;height:28px;background:#f8f8f8"></div>
<div class="t" style="left:288px;top:696.500px;width:10px;color:#222;font-weight:bold">#</div>
<svg style="left:299px;top:699px" width="11" height="11" viewBox="0 0 11 11"><path d="M0.500 0.500h8l2 2v8h-10z" fill="#4caf50"/><rect x="2.500" y="0.500" width="5" height="3.500" fill="#c8e6c9"/><rect x="2" y="6" width="7" height="4.500" fill="#e8f5e9"/></svg>
<div class="t" style="left:317.500px;top:696.500px;width:96px;color:#333"><i>团</i><i>队</i><i>图</i><i>书</i><i>馆</i><i>资</i><i>料</i><i>库</i></div>
<!-- RIGHT -->
<div class="tab" style="left:984.5px;width:45.5px"><i>资</i><i>料</i><i>库</i></div><div class="ul" style="left:984.5px;width:45.5px"></div>
<div class="tab on" style="left:1038px;width:46px"><i>选</i><i>中</i><i>项</i></div><div class="ul on" style="left:1038px;width:46px"></div>
<div class="tab" style="left:1092px;width:46px"><i>参</i><i>考</i><i>项</i></div><div class="ul" style="left:1092px;width:46px"></div>
<svg style="left:1180.500px;top:156.500px" width="12" height="8" viewBox="0 0 12 8"><path d="M6.500 0L12 4 6.500 8V5.700H4V2.300h2.500z" fill="#666"/><rect x="0" y="2.300" width="1" height="3.400" fill="#bbb"/><rect x="2" y="2.300" width="1.200" height="3.400" fill="#999"/></svg>
<div class="card" style="left:927px;top:194px;width:264.500px;height:97.500px"></div>
<div class="h" style="left:936px;top:203.500px;width:60px"><i>简</i><i>介</i></div>
<div class="t" style="left:1116px;top:207.500px;width:26px;color:#444"><i>克</i><i>隆</i></div>
<div class="t red" style="left:1154px;top:207.500px;width:26px"><i>更</i><i>名</i></div>
<svg style="left:940.500px;top:239.500px" width="12" height="12" viewBox="0 0 24 24"><path d="M12 2.500l2.900 6.500 7.100.800-5.300 4.700 1.500 7L12 17.900l-6.200 3.600 1.500-7L2 9.800l7.100-.8z" fill="none" stroke="#444" stroke-width="2.200" stroke-linejoin="round"/></svg>
<div class="t" style="left:958px;top:238px;width:60px;height:20px;line-height:20px;font-size:14px;color:#444"><i>大</i><i>路</i><i>向</i><i>前</i></div>
<div class="t" style="left:958.700px;top:261px;height:18px;line-height:18px;font-size:11.500px;color:#ababab">15.7 KB</div><div class="t" style="left:1007px;top:261px;height:18px;line-height:18px;font-size:12px;color:#d9d9d9">|</div><div class="t" style="left:1016px;top:261px;height:18px;line-height:18px;font-size:12.500px;color:#ababab">.docx</div><div class="t" style="left:1053px;top:261px;height:18px;line-height:18px;font-size:12px;color:#d9d9d9">|</div><div class="t" style="left:1062.500px;top:261px;height:18px;line-height:18px;font-size:12.300px;color:#ababab">2019-06-26 15:06</div>

<div class="card" style="left:927px;top:300.500px;width:264.500px;height:133.500px"></div>
<div class="h" style="left:936px;top:309.500px;width:60px"><i>标</i><i>签</i></div>
<div class="t" style="left:1077.500px;top:313px;width:26px;color:#444"><i>复</i><i>制</i></div>
<div class="t" style="left:1116px;top:313px;width:26px;color:#444"><i>清</i><i>除</i></div>
<div class="t red" style="left:1154px;top:313px;width:26px"><i>编</i><i>辑</i></div>
<div class="t red" style="left:935.500px;top:347.5px;width:47.0px"><i>出</i><i>借</i><i>状</i><i>态</i></div><svg style="left:990.5px;top:353.0px" width="6" height="4"><path d="M0 0h6L3 3.500z" fill="#999"/></svg><svg style="left:1007.0px;top:349.5px" width="12" height="11" viewBox="0 0 12 11"><use href="#icp"/></svg><div class="t" style="left:1140.5px;top:347.5px;width:35.5px;color:#222"><i>已</i><i>借</i><i>出</i></div><svg style="left:1124.5px;top:349.0px" width="13" height="13" viewBox="0 0 13 13"><use href="#i-gt"/></svg>
<div class="t red" style="left:935.500px;top:367.3px;width:47.0px"><i>书</i><i>籍</i><i>分</i><i>类</i></div><svg style="left:990.5px;top:372.8px" width="6" height="4"><path d="M0 0h6L3 3.500z" fill="#999"/></svg><div class="t" style="left:1129.0px;top:367.3px;width:47.0px;color:#222"><i>经</i><i>济</i><i>管</i><i>理</i></div><svg style="left:1113.0px;top:368.8px" width="13" height="13" viewBox="0 0 13 13"><use href="#i-dollar"/></svg>
<div class="t red" style="left:935.500px;top:387px;width:35.5px"><i>好</i><i>评</i><i>度</i></div><svg style="left:979.0px;top:392.5px" width="6" height="4"><path d="M0 0h6L3 3.500z" fill="#999"/></svg><svg style="left:995.5px;top:389px" width="12" height="11" viewBox="0 0 12 11"><use href="#icp"/></svg><div class="t" style="left:1129.0px;top:387px;width:47.0px;color:#222"><i>借</i><i>阅</i><i>热</i><i>门</i></div><svg style="left:1113.0px;top:388.5px" width="13" height="13" viewBox="0 0 13 13"><use href="#i-bm"/></svg>
<div class="t red" style="left:935.500px;top:406.5px;width:47.0px"><i>文</i><i>件</i><i>类</i><i>别</i></div><svg style="left:990.5px;top:412.0px" width="6" height="4"><path d="M0 0h6L3 3.500z" fill="#999"/></svg><div class="t" style="left:1129.0px;top:406.5px;width:47.0px;color:#222"><i>内</i><i>含</i><i>书</i><i>评</i></div><svg style="left:1113.0px;top:408.0px" width="13" height="13" viewBox="0 0 13 13"><use href="#i-pen"/></svg>
<div class="card" style="left:927px;top:442px;width:264.500px;height:262.500px"></div>
<div class="h" style="left:936px;top:451px;width:60px"><i>预</i><i>览</i></div>
<div class="t" style="left:1116px;top:455px;width:26px;color:#444"><i>放</i><i>大</i></div>
<div class="t red" style="left:1154px;top:455px;width:26px"><i>打</i><i>开</i></div>
<div class="a" style="left:937.500px;top:501px;width:90px;height:28px;line-height:28px;font-size:20px;color:#1d1d1d;overflow:hidden"><i>书</i><i>籍</i><i>简</i><i>介</i></div>
<div class="a" id="pv" style="left:937.500px;top:532px;width:246px;height:171.500px;overflow:hidden;font-size:13.300px;line-height:19.850px;color:#2a2a2a;white-space:nowrap">Lorem ipsum dolor sit amet,<br>consectetuer adipiscing elit. Maecenas<br>porttitor congue massa. Fusce<br>posuere, magna sed pulvinar ultricies,<br>purus lectus malesuada libero, sit<br>amet commodo magna eros quis<br>urna.<br><b style="color:#111">Nunc viverra imperdiet enim. Fusce<br>est. Vivamus a tellus.</b></div>
<div class="a" style="left:1186.500px;top:502px;width:3.500px;height:187px;border-radius:2px;background:#d4d4d4"></div>
<div class="a" style="left:1186px;top:502px;width:4.500px;height:52px;border-radius:2px;background:#a9a9a9"></div>
<!-- POPUP -->
<div class="a" style="left:686px;top:227.500px;width:208.500px;height:413px;background:#fff;border-radius:6px;box-shadow:0 1px 12px rgba(0,0,0,.11)"></div>
<div class="h" style="left:703px;top:244px;width:60px;font-size:21.500px"><i>操</i><i>作</i></div>
<div class="hr" style="left:704px;top:303.1px;width:173px;background:#ececec"></div><div class="hr" style="left:704px;top:338.9px;width:173px;background:#ececec"></div><div class="hr" style="left:704px;top:374.7px;width:173px;background:#ececec"></div><div class="hr" style="left:704px;top:410.2px;width:173px;background:#ececec"></div><div class="hr" style="left:704px;top:445.7px;width:173px;background:#ececec"></div><div class="hr" style="left:704px;top:481.3px;width:173px;background:#ececec"></div><div class="hr" style="left:704px;top:516.9px;width:173px;background:#ececec"></div><div class="hr" style="left:704px;top:552.4px;width:173px;background:#ececec"></div><div class="hr" style="left:704px;top:587.9px;width:173px;background:#ececec"></div>
<svg style="left:714px;top:282.3px" width="11" height="13" viewBox="0 0 11 13"><rect x="0.700" y="2.200" width="9.600" height="10" rx=".8" fill="none" stroke="#333" stroke-width="1.200"/><rect x="3.500" y="0.500" width="4" height="2.600" fill="#333"/></svg><div class="t" style="left:731.5px;top:280.8px;width:47.0px;color:#333"><i>复</i><i>制</i><i>文</i><i>件</i></div>
<svg style="left:802px;top:282.8px" width="12" height="12" viewBox="0 0 12 12"><rect x="0.500" y="0.500" width="11" height="11" fill="#fff" stroke="#ccc"/><path d="M2.800 6.200l2.200 2.300 4.200-5" fill="none" stroke="#bbb" stroke-width="1.200"/></svg><div class="t" style="left:819.5px;top:280.8px;width:47.0px;color:#333"><i>取</i><i>消</i><i>选</i><i>中</i></div>
<svg style="left:756px;top:318.8px" width="12" height="12" viewBox="0 0 12 12"><path d="M0.600 0.600h5l2 2v5.500h-7z" fill="#fff" stroke="#333" stroke-width="1.100"/><path d="M5.600 5.500v5.900h6V6l-2-2" fill="none" stroke="#333" stroke-width="1.100"/></svg><div class="t" style="left:773.5px;top:316.8px;width:93.0px;color:#333"><i>创</i><i>建</i><i>一</i><i>个</i><i>克</i><i>隆</i><i>副</i><i>本</i></div>
<svg style="left:756px;top:354.3px" width="12" height="12" viewBox="0 0 12 12"><path d="M9 0.800l2.200 2.200L4 10.200l-3.300 1.100L1.800 8z" fill="#333"/><path d="M7.800 2.200l2 2" stroke="#fff" stroke-width=".7"/></svg><div class="t" style="left:773.5px;top:352.3px;width:93.0px;color:#333"><i>修</i><i>改</i><i>选</i><i>中</i><i>文</i><i>件</i><i>标</i><i>题</i></div>
<svg style="left:714px;top:389.3px" width="13" height="13" viewBox="0 0 24 24"><path d="M12 2.500l2.900 6.500 7.100.800-5.300 4.700 1.500 7L12 17.900l-6.200 3.600 1.500-7L2 9.800l7.100-.8z" fill="none" stroke="#c4c4c4" stroke-width="1.600" stroke-linejoin="round"/></svg><div class="t" style="left:731.5px;top:387.8px;width:47.0px;color:#333"><i>清</i><i>除</i><i>星</i><i>标</i></div>
<svg style="left:802px;top:389.3px" width="13" height="13" viewBox="0 0 24 24"><path d="M12 1.500l3.200 7 7.600.800-5.700 5.100 1.600 7.500L12 18.100l-6.700 3.800 1.600-7.500L1.200 9.300l7.600-.8z" fill="#333"/></svg><div class="t" style="left:819.5px;top:387.8px;width:47.0px;color:#333"><i>标</i><i>记</i><i>星</i><i>标</i></div>
<svg style="left:714px;top:425.3px" width="12" height="12" viewBox="0 0 12 12"><path d="M1 5v6h10V5" fill="none" stroke="#333" stroke-width="1.500"/><path d="M6 8.500V2" stroke="#333" stroke-width="1.600"/><path d="M3 3.500L6 0.500l3 3z" fill="#333"/></svg><div class="t" style="left:731.5px;top:423.3px;width:47.0px;color:#333"><i>导</i><i>出</i><i>文</i><i>件</i></div>
<svg style="left:802px;top:425.8px" width="13" height="11" viewBox="0 0 13 11"><rect x="0" y="0.500" width="7.500" height="7" fill="#333"/><path d="M8.300 2.500h2.700l2 2.800v2.200H8.300z" fill="#333"/><circle cx="3" cy="8.800" r="1.700" fill="#333" stroke="#fff" stroke-width=".7"/><circle cx="10" cy="8.800" r="1.700" fill="#333" stroke="#fff" stroke-width=".7"/></svg><div class="t" style="left:819.5px;top:423.3px;width:47.0px;color:#333"><i>移</i><i>动</i><i>文</i><i>件</i></div>
<svg style="left:714px;top:461.3px" width="11" height="11" viewBox="0 0 11 11"><path d="M1.500 1.500l8 8M9.500 1.500l-8 8" stroke="#333" stroke-width="1.400"/></svg><div class="t" style="left:731.5px;top:458.8px;width:47.0px;color:#333"><i>彻</i><i>底</i><i>删</i><i>除</i></div>
<svg style="left:802px;top:460.8px" width="12" height="12" viewBox="0 0 12 12"><rect x="1.700" y="0.600" width="8.600" height="6" fill="#fff" stroke="#333" stroke-width="1.100"/><path d="M3.500 2.600h5M3.500 4.500h5" stroke="#333" stroke-width=".9"/><rect x="0.500" y="6.800" width="11" height="4.600" rx=".8" fill="#333"/><rect x="4" y="8.300" width="4" height="1.200" fill="#fff"/></svg><div class="t" style="left:819.5px;top:458.8px;width:47.0px;color:#333"><i>归</i><i>档</i><i>文</i><i>件</i></div>
<svg style="left:714px;top:496.3px" width="12" height="12" viewBox="0 0 12 12"><rect x="0.500" y="1.500" width="11" height="10" fill="#fff" stroke="#c9c9c9"/><path d="M0.500 4.500h11M0.500 7h11M0.500 9.300h11M3.300 4.500v7M6 4.500v7M8.700 4.500v7" stroke="#d5d5d5" stroke-width=".8"/></svg><div class="t" style="left:731.5px;top:494.3px;width:47.0px;color:#333"><i>清</i><i>除</i><i>日</i><i>期</i></div>
<svg style="left:802px;top:496.3px" width="12" height="12" viewBox="0 0 12 12"><rect x="0.500" y="1.500" width="11" height="10" fill="#333"/><path d="M0.500 4.500h11M0.500 7h11M0.500 9.300h11M3.300 4.500v7M6 4.500v7M8.700 4.500v7" stroke="#fff" stroke-width=".8"/><path d="M3 0v2.500M9 0v2.500" stroke="#333" stroke-width="1.300"/></svg><div class="t" style="left:819.5px;top:494.3px;width:47.0px;color:#333"><i>标</i><i>记</i><i>日</i><i>期</i></div>
<svg style="left:714px;top:531.8px" width="11" height="12" viewBox="0 0 11 12"><path d="M0.500 0.500h7l3 3v8h-10z" fill="#fff" stroke="#c9c9c9"/><path d="M2 9.500l2.200-3 1.600 2 1.200-1.200 2 2.200z" fill="#d0d0d0"/></svg><div class="t" style="left:731.5px;top:529.8px;width:47.0px;color:#333"><i>清</i><i>除</i><i>封</i><i>面</i></div>
<svg style="left:802px;top:531.8px" width="11" height="12" viewBox="0 0 11 12"><path d="M0.600 0.600h6.900l2.900 2.900v7.900H0.600z" fill="#fff" stroke="#333" stroke-width="1.200"/><path d="M2 9.600l2.200-3.200 1.600 2 1.200-1.200 2 2.400z" fill="#333"/><circle cx="3.500" cy="4" r="1" fill="#333"/></svg><div class="t" style="left:819.5px;top:529.8px;width:47.0px;color:#333"><i>定</i><i>义</i><i>封</i><i>面</i></div>
<svg style="left:744.5px;top:568.3px" width="14" height="10" viewBox="0 0 14 10"><rect x="2.200" y="0.600" width="9.600" height="6.300" fill="#fff" stroke="#333" stroke-width="1.200"/><path d="M0 8.800h14" stroke="#333" stroke-width="1.600"/></svg><div class="t" style="left:762.0px;top:565.3px;width:104.5px;color:#333"><i>打</i><i>开</i><i>外</i><i>部</i><i>文</i><i>件</i><i>管</i><i>理</i><i>器</i></div>
<svg style="left:779px;top:602.8px" width="12" height="12" viewBox="0 0 12 12"><circle cx="6" cy="6" r="5.200" fill="none" stroke="#333" stroke-width="1.200"/><path d="M4.700 3.600L8.500 6 4.700 8.400z" fill="#333"/></svg><div class="t" style="left:796.5px;top:600.8px;width:70.0px;color:#333"><i>更</i><i>多</i><i>打</i><i>开</i><i>方</i><i>式</i></div>
<!-- FAB -->
<div class="a" style="left:776px;top:659.500px;width:29.500px;height:29.500px;border-radius:50%;background:rgba(30,30,30,.92)"></div>
<svg style="left:785px;top:668.500px" width="11" height="11"><path d="M5.500 0v11M0 5.500h11" stroke="#8bd12a" stroke-width="1.800"/></svg>
<div class="a" style="left:824px;top:659.500px;width:29.500px;height:29.500px;border-radius:50%;background:rgba(30,30,30,.92)"></div>
<svg style="left:832.500px;top:667px" width="13" height="13" viewBox="0 0 24 24"><path d="M22.700 19l-9.100-9.100c.9-2.300.4-5-1.500-6.900-2-2-5-2.400-7.400-1.300L9 6 6 9 1.600 4.700C.4 7.100.9 10.100 2.900 12.100c1.900 1.900 4.600 2.400 6.900 1.500l9.100 9.100c.4.400 1 .4 1.400 0l2.300-2.300c.5-.4.500-1.100.1-1.400z" fill="#fff"/></svg>
<div class="a" style="left:0;top:716px;width:1200px;height:1px;background:#2f7bd6"></div>
<div class="a" style="left:0;top:717px;width:1202px;height:77px;background:#fff"></div>
<div class="a" style="left:1200px;top:0;width:2px;height:794px;background:#fff"></div>
</body>
</html>
